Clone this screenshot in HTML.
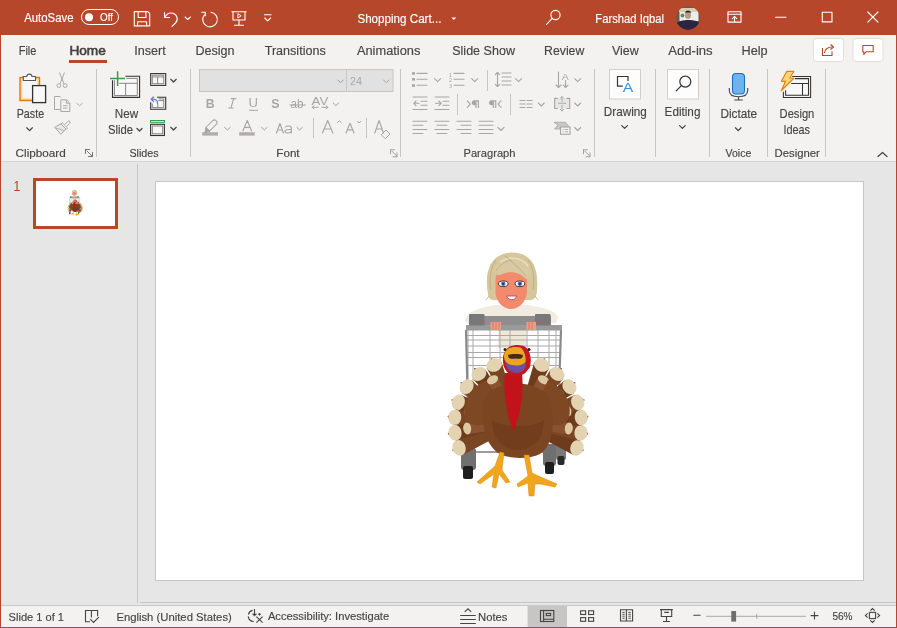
<!DOCTYPE html>
<html><head><meta charset="utf-8">
<style>
*{margin:0;padding:0;box-sizing:border-box}
html,body{width:897px;height:628px;overflow:hidden;background:#B7472A;font-family:"Liberation Sans",sans-serif}
.bg{position:absolute}
svg{position:absolute;left:0;top:0;will-change:transform}
text{font-family:"Liberation Sans",sans-serif}
</style></head><body>
<div class="bg" style="left:0;top:0;width:897px;height:35px;background:#B7472A"></div>
<div class="bg" style="left:1px;top:35px;width:895px;height:126px;background:#F3F2F1"></div>
<div class="bg" style="left:1px;top:161px;width:895px;height:1px;background:#D6D5D3"></div>
<div class="bg" style="left:1px;top:162px;width:895px;height:443px;background:#E6E6E6"></div>
<div class="bg" style="left:1px;top:605px;width:895px;height:1px;background:#C9C9C9"></div>
<div class="bg" style="left:1px;top:606px;width:895px;height:21px;background:#F3F2F1"></div>
<svg width="897" height="628" viewBox="0 0 897 628">
<!-- ============ TITLE BAR ============ -->
<g fill="#fff" font-size="12" stroke="#fff" stroke-width="0.15">
  <text x="24.2" y="21.7" textLength="49.4" lengthAdjust="spacingAndGlyphs">AutoSave</text>
  <text x="100" y="20.9" font-size="10.3" textLength="12.9" lengthAdjust="spacingAndGlyphs">Off</text>
  <text x="357.4" y="22.7" textLength="84" lengthAdjust="spacingAndGlyphs">Shopping Cart...</text>
  <text x="595.3" y="22.7" textLength="68.8" lengthAdjust="spacingAndGlyphs">Farshad Iqbal</text>
</g>
<g fill="none" stroke="#fff" stroke-width="1">
  <rect x="81.5" y="9.5" width="37" height="15" rx="7.5"/>
</g>
<circle cx="89" cy="17.2" r="4" fill="#fff"/>
<g fill="none" stroke="#fff" stroke-width="1.1" stroke-linejoin="round" stroke-linecap="round">
  <!-- save -->
  <path d="M134.3 11.6 H147.8 L149.7 13.5 V25.9 H134.3 Z"/>
  <path d="M138.2 11.6 V17.5 H145.9 V11.6"/>
  <path d="M137.6 25.9 V21.7 H146.6 V25.9"/>
  <!-- undo -->
  <path d="M164.5 12.5 V17.5 H169.5"/>
  <path d="M164.8 17.2 C167 13.5 170 12.5 173 13.3 C177.5 14.8 178.5 20 175.5 23 L172 26.3"/>
  <path d="M185 17 L187.7 19.5 L190.4 17"/>
  <!-- redo circle -->
  <path d="M204.5 14.8 A7.3 7.3 0 1 0 211 12.3"/>
  <path d="M201.8 12.3 H205.3 V15.8"/>
  <!-- presenter -->
  <path d="M231.8 11.8 H246.2"/>
  <path d="M233 12 V20 H245 V12"/>
  <path d="M239 20 V25.2 M234.5 25.2 H243.5"/>
  <path d="M238.2 13.8 L241.2 15.8 L238.2 17.8 Z" stroke-width="0.9"/>
  <!-- customize -->
  <path d="M264.5 14.8 H271"/>
  <path d="M264.8 18 L267.7 20.8 L270.6 18"/>
  <!-- search -->
  <circle cx="555.5" cy="15" r="4.6"/>
  <path d="M552.2 18.3 L546.5 24.5"/>
  <!-- ribbon display -->
  <rect x="728" y="11.8" width="13" height="10.3"/>
  <path d="M728 14.3 H741"/>
  <path d="M734.5 21.8 V16.5 M732.3 18.6 L734.5 16.4 L736.7 18.6"/>
  <!-- minimize/maximize/close -->
  <path d="M775.6 17.3 H786"/>
  <rect x="822.3" y="12.2" width="9.7" height="9.7"/>
  <path d="M867.8 12 L878 22.2 M878 12 L867.8 22.2"/>
</g>

<path d="M451.3 17.4 H456.3 L453.8 20 Z" fill="#fff"/>
<defs><clipPath id="av"><circle cx="688" cy="18" r="11.8"/></clipPath></defs>
<g clip-path="url(#av)">
  <rect x="676" y="6" width="24" height="24" fill="#6b5a48"/>
  <rect x="679" y="8" width="20" height="4" fill="#d8cdb0"/>
  <rect x="679.5" y="12" width="19" height="9" fill="#e8eef0"/>
  <circle cx="682.5" cy="15.5" r="2" fill="#6d8a55"/>
  <ellipse cx="688" cy="15" rx="3" ry="4" fill="#b89a86"/>
  <path d="M684.5 12.5 Q688 8.5 691.5 12.5 Z" fill="#2a2226"/>
  <path d="M676 30 V23 Q682 19.5 688 20 Q695 19.5 700 23 V30 Z" fill="#2e2440"/>
</g>
<!-- ============ TABS ============ -->
<g fill="#444" font-size="12.5" stroke="#444" stroke-width="0.15">
  <text x="18.7" y="55" textLength="17.7" lengthAdjust="spacingAndGlyphs">File</text>
  <text x="69.4" y="55" textLength="36.4" lengthAdjust="spacingAndGlyphs" fill="#404040" stroke="#404040" stroke-width="0.55">Home</text>
  <text x="134.2" y="55" textLength="31.5" lengthAdjust="spacingAndGlyphs">Insert</text>
  <text x="195.5" y="55" textLength="39.1" lengthAdjust="spacingAndGlyphs">Design</text>
  <text x="264.7" y="55" textLength="61" lengthAdjust="spacingAndGlyphs">Transitions</text>
  <text x="356.9" y="55" textLength="63.5" lengthAdjust="spacingAndGlyphs">Animations</text>
  <text x="452.2" y="55" textLength="62.8" lengthAdjust="spacingAndGlyphs">Slide Show</text>
  <text x="544.1" y="55" textLength="40.2" lengthAdjust="spacingAndGlyphs">Review</text>
  <text x="612" y="55" textLength="26.8" lengthAdjust="spacingAndGlyphs">View</text>
  <text x="668.2" y="55" textLength="44.5" lengthAdjust="spacingAndGlyphs">Add-ins</text>
  <text x="741.5" y="55" textLength="26.1" lengthAdjust="spacingAndGlyphs">Help</text>
</g>
<rect x="69" y="60" width="38" height="3" fill="#B7472A"/>
<rect x="813.5" y="38.5" width="30" height="23" rx="3" fill="#fff" stroke="#E1DFDD"/>
<rect x="853" y="38.5" width="30" height="23" rx="3" fill="#fff" stroke="#E1DFDD"/>
<g fill="none" stroke="#B7472A" stroke-width="1.1" stroke-linejoin="round">
  <path d="M822.5 48 V55.5 H832 V51.5"/>
  <path d="M824.5 53 C825 48.5 828 47 832.5 47"/>
  <path d="M830.5 44.5 L833.5 47 L830.5 49.5"/>
  <path d="M862.8 45.5 H873.2 V51.8 H866 L863.8 54.3 V51.8 H862.8 Z"/>
</g>
<!-- ============ RIBBON ============ -->
<g fill="#444" font-size="12.9" stroke="#444" stroke-width="0.15">
  <text x="16.7" y="117.9" textLength="27.4" lengthAdjust="spacingAndGlyphs">Paste</text>
  <text x="114.7" y="117.9" textLength="23.4" lengthAdjust="spacingAndGlyphs">New</text>
  <text x="108" y="133.7" textLength="25" lengthAdjust="spacingAndGlyphs">Slide</text>
  <text x="603.8" y="115.9" textLength="43" lengthAdjust="spacingAndGlyphs">Drawing</text>
  <text x="664.6" y="115.9" textLength="35.8" lengthAdjust="spacingAndGlyphs">Editing</text>
  <text x="720.4" y="117.8" textLength="36.8" lengthAdjust="spacingAndGlyphs">Dictate</text>
  <text x="779.6" y="117.8" textLength="34.7" lengthAdjust="spacingAndGlyphs">Design</text>
  <text x="783.4" y="133.7" textLength="26.6" lengthAdjust="spacingAndGlyphs">Ideas</text>
</g>
<g fill="#444" font-size="11.3" stroke="#444" stroke-width="0.15">
  <text x="15.6" y="157" textLength="50.2" lengthAdjust="spacingAndGlyphs">Clipboard</text>
  <text x="129.4" y="157" textLength="29.1" lengthAdjust="spacingAndGlyphs">Slides</text>
  <text x="276.3" y="156.6" textLength="23.3" lengthAdjust="spacingAndGlyphs">Font</text>
  <text x="463.5" y="156.6" textLength="52" lengthAdjust="spacingAndGlyphs">Paragraph</text>
  <text x="725.6" y="157.3" textLength="25.7" lengthAdjust="spacingAndGlyphs">Voice</text>
  <text x="774.6" y="157.3" textLength="45.3" lengthAdjust="spacingAndGlyphs">Designer</text>
</g>
<!-- separators -->
<g fill="#C8C6C4">
  <rect x="96" y="69" width="1" height="88"/>
  <rect x="190" y="69" width="1" height="88"/>
  <rect x="400" y="69" width="1" height="88"/>
  <rect x="594" y="69" width="1" height="88"/>
  <rect x="655" y="69" width="1" height="88"/>
  <rect x="709" y="69" width="1" height="88"/>
  <rect x="767" y="69" width="1" height="88"/>
  <rect x="825" y="69" width="1" height="88"/>
  <rect x="313" y="118" width="1" height="20"/>
  <rect x="366" y="118" width="1" height="20"/>
  <rect x="487" y="70" width="1" height="21"/>
  <rect x="457" y="94" width="1" height="21"/>
  <rect x="510" y="94" width="1" height="21"/>
</g>
<!-- chevrons dark -->
<g fill="none" stroke="#444" stroke-width="1.25" stroke-linecap="round" stroke-linejoin="round">
  <path d="M26.8 127.8 L29.6 130.6 L32.4 127.8"/>
  <path d="M137 128.5 L139.5 131 L142 128.5"/>
  <path d="M170.8 79.3 L173.5 82 L176.2 79.3"/>
  <path d="M170.8 127.3 L173.5 130 L176.2 127.3"/>
  <path d="M621.8 125.6 L624.6 128.4 L627.4 125.6"/>
  <path d="M679.6 125.6 L682.4 128.4 L685.2 125.6"/>
  <path d="M735.4 127.8 L738.2 130.6 L741 127.8"/>
  <path d="M878 156.5 L882.5 152.5 L887 156.5" stroke-width="1.2"/>
  <!-- dialog launchers -->
  <path d="M85.5 149.5 H89.5 M85.5 149.5 V153.5 M87 151 L92.5 156.5 M92.5 152.5 V156.5 H88.5" stroke="#666" stroke-width="0.9"/>
  <path d="M390.5 149.8 H394.5 M390.5 149.8 V153.8 M392 151.3 L397 156.3 M397 152.8 V156.8 H393" stroke="#999" stroke-width="0.9"/>
  <path d="M583.5 149.8 H587.5 M583.5 149.8 V153.8 M585 151.3 L590 156.3 M590 152.8 V156.8 H586" stroke="#999" stroke-width="0.9"/>
</g>
<!-- Paste -->
<rect x="20" y="77.5" width="19.5" height="23" fill="#FFD98C" stroke="#E07A10" stroke-width="1.4"/>
<rect x="22.2" y="79.7" width="15.1" height="18.6" fill="#F6F6F6"/>
<path d="M23.3 80.5 V76.5 H26.8 C27 73.3 31.8 73.3 32 76.5 H35.5 V80.5 Z" fill="#fff" stroke="#555" stroke-width="1.1"/>
<rect x="32.6" y="85.6" width="13" height="17" fill="#F8F8F8" stroke="#333" stroke-width="1.3"/>
<!-- Cut/Copy/Format painter (disabled grey) -->
<g fill="none" stroke="#A8A8A8" stroke-width="1">
  <path d="M59.5 72.5 L64 84 M64.5 72.5 L60 84"/>
  <circle cx="58.8" cy="85.6" r="1.9"/>
  <circle cx="65.2" cy="85.6" r="1.9"/>
  <path d="M61 109.5 H54.5 V96.5 H60 L61 97.5"/>
  <path d="M60.8 99.8 H66.5 L69.8 103 V111.5 H60.8 Z" fill="#F1F1F1"/>
  <path d="M66.3 99.8 V103.2 H69.8"/>
  <path d="M63 105.7 H67.5 M63 108.1 H67.5" stroke-width="0.9"/>
  <path d="M76.6 103 L79.6 105.8 L82.6 103"/>
  <path d="M61.3 123.6 L54.6 127.2 L60.9 134.3 L66.2 129 Z" fill="#E8E8E8"/>
  <path d="M55.8 128 L64.3 130.6" stroke-width="0.8"/>
  <path d="M62.2 122.7 L67.6 128 L66.3 129.3 L60.9 124 Z" fill="#F3F2F1"/>
  <path d="M64.6 124.7 L67.9 121.3 A1.3 1.3 0 0 1 69.8 123.2 L66.4 126.6" fill="#F3F2F1"/>
</g>
<!-- New slide -->
<rect x="114.4" y="78.4" width="22.9" height="17.1" fill="#F8F8F8"/>
<path d="M125.4 76.3 H139.6 V97.4 H112.5 V80.2" fill="none" stroke="#333" stroke-width="1.1"/>
<path d="M126.4 78.4 H137.3 V95.5 H114.4 V80.2 M119.2 83.3 H137.3 M125.6 83.3 V95.5" fill="none" stroke="#7A7A7A" stroke-width="0.9"/>
<path d="M110 78.5 H125.1 M117.6 71.2 V86.1" stroke="#33A04F" stroke-width="1.5" fill="none"/>
<!-- Layout / Reset / Section -->
<rect x="152" y="75" width="11.8" height="8.6" fill="#F8F8F8"/>
<rect x="150.7" y="73.6" width="15" height="11.8" fill="none" stroke="#333" stroke-width="1.1"/>
<path d="M152.3 75.2 H163.7 V83.7 H152.3 Z M152.3 76.9 H163.7 M157.6 76.9 V83.7" fill="none" stroke="#7A7A7A" stroke-width="0.9"/>
<rect x="152" y="98.5" width="11.8" height="9.3" fill="#F8F8F8"/>
<path d="M157 97.2 H165.7 V109.3 H150.7 V102.3" fill="none" stroke="#333" stroke-width="1.1"/>
<path d="M158.5 98.9 H163.7 V107.6 H152.3 V103.5 M158.5 100.6 H163.7 M157.8 104 V107.6" fill="none" stroke="#7A7A7A" stroke-width="0.9"/>
<path d="M157.6 103.6 C157.8 100.4 155.6 98.8 151.6 99.2 M153.6 97 L151.2 99.3 L153.6 101.5" fill="none" stroke="#3A8FD9" stroke-width="1.3" stroke-linecap="round" stroke-linejoin="round"/>
<rect x="150.5" y="120.5" width="14" height="1.8" fill="#E8F5EC" stroke="#2E9E4F" stroke-width="1"/>
<rect x="152" y="125.6" width="11" height="8.4" fill="#F8F8F8"/>
<rect x="150.6" y="124.3" width="13.8" height="11.2" fill="none" stroke="#333" stroke-width="1.1"/>
<rect x="152.3" y="126" width="10.4" height="7.8" fill="none" stroke="#7A7A7A" stroke-width="0.9"/>
<!-- Font boxes -->
<rect x="199.5" y="69.5" width="147" height="22" fill="#E1E1E1" stroke="#C6C6C6"/>
<rect x="346.5" y="69.5" width="46.5" height="22" fill="#E1E1E1" stroke="#C6C6C6"/>
<text x="350" y="84.5" font-size="11.5" fill="#A9A9A9" textLength="12" lengthAdjust="spacingAndGlyphs">24</text>
<g fill="none" stroke="#A0A0A0" stroke-width="1" stroke-linecap="round" stroke-linejoin="round">
  <path d="M337.8 80 L340.6 82.8 L343.4 80"/>
  <path d="M383.6 80 L386.4 82.8 L389.2 80"/>
  <path d="M333.2 103 L335.9 105.6 L338.6 103"/>
  <path d="M224.5 127.3 L227.4 130 L230.3 127.3"/>
  <path d="M261.5 127.3 L264.3 130 L267.1 127.3"/>
  <path d="M296.8 127.3 L299.6 130 L302.4 127.3"/>
</g>
<g fill="#A6A6A6">
  <text x="205.8" y="108" font-size="13" font-weight="bold" textLength="8.8" lengthAdjust="spacingAndGlyphs">B</text>
  <text x="248.5" y="107" font-size="12.5" textLength="9.5" lengthAdjust="spacingAndGlyphs">U</text>
  <text x="271.2" y="108.3" font-size="13.5" font-weight="bold" textLength="8.3" lengthAdjust="spacingAndGlyphs">S</text>
  <text x="290.5" y="108" font-size="12" textLength="13" lengthAdjust="spacingAndGlyphs">ab</text>
  <text x="311.5" y="104.5" font-size="11.5" textLength="16.8" lengthAdjust="spacingAndGlyphs">AV</text>
  <rect x="249" y="109.8" width="9" height="1"/>
  <rect x="202.2" y="132.2" width="15.8" height="3.4" fill="#B0ADAA"/>
  <rect x="239.2" y="132.2" width="15.5" height="3.4" fill="#B0ADAA"/>
</g>
<g fill="none" stroke="#A6A6A6" stroke-width="1" stroke-linecap="round" stroke-linejoin="round">
  <path d="M289.8 105 H305.5"/>
  <path d="M231.2 98.6 H236 M233.6 98.6 L231 108 M228.6 108 H233.3" stroke-width="1.05"/>
  <path d="M243 130.7 L247.25 120.5 L251.5 130.7 M244.87 127.44 H249.63" stroke-width="1.15"/>
  <path d="M322.5 133 L327.65 120.5 L332.8 133 M324.77 129.00 H330.53" stroke-width="1.15"/>
  <path d="M346 133 L350.00 123.3 L354 133 M347.76 129.90 H352.24" stroke-width="1.15"/>
  <path d="M374.8 133 L379.10 120.5 L383.4 133 M376.69 129.00 H381.51" stroke-width="1.15"/>
  <path d="M276.5 133 L279.95 123.5 L283.4 133 M278.02 129.96 H281.88" stroke-width="1.15"/>
  <path d="M285.6 127 C286.8 125.6 291.4 125.5 291.4 128.3 V133 M291.4 129.6 C287 129.2 285 130 285 131.3 C285 133.6 290.5 133.6 291.4 131.6" stroke-width="1.1"/>
  <path d="M314 108.8 L312.2 107.3 L314 105.8 M312.2 107.3 H318.3 M321.8 107.3 H327.9 M326.1 105.8 L327.9 107.3 L326.1 108.8"/>
  <path d="M337.5 122.5 L339.3 120.8 L341.1 122.5"/>
  <path d="M357.5 121.3 L359.2 123 L360.9 121.3"/>
  <path d="M381.5 134.5 L386 130 L390 134 L385.5 138.5 Z"/>
  <g transform="translate(210.5 126.5) rotate(-45)"><path d="M-4 -2.6 H5.5 A2.6 2.6 0 0 1 5.5 2.6 H-4 Z"/><path d="M-4 -2.6 L-8.5 0.5 L-4 2.6 Z" fill="#A6A6A6"/></g>
</g>
<!-- Paragraph icons -->
<g fill="#A6A6A6">
  <rect x="412" y="72.2" width="3" height="2.5"/><rect x="412" y="78.1" width="3" height="2.5"/><rect x="412" y="84.3" width="3" height="2.5"/>
  <text x="449" y="76.5" font-size="5" textLength="3" lengthAdjust="spacingAndGlyphs">1</text>
  <text x="449" y="82.4" font-size="5" textLength="3" lengthAdjust="spacingAndGlyphs">2</text>
  <text x="449" y="88.4" font-size="5" textLength="3" lengthAdjust="spacingAndGlyphs">3</text>
  <text x="561.8" y="79.5" font-size="9.5" textLength="7" lengthAdjust="spacingAndGlyphs">A</text>
  <path d="M471.7 102.7 C471.7 101.2 472.8 100.3 474.3 100.3 H479 V108 H477.8 V101.5 H476.6 V108 H475.4 V105.2 H474.3 C472.8 105.2 471.7 104.2 471.7 102.7 Z"/>
  <path d="M489 102.7 C489 101.2 490.1 100.3 491.6 100.3 H496.3 V108 H495.1 V101.5 H493.9 V108 H492.7 V105.2 H491.6 C490.1 105.2 489 104.2 489 102.7 Z"/>
</g>
<g fill="none" stroke="#A6A6A6" stroke-width="1.1" stroke-linecap="round" stroke-linejoin="round">
  <path d="M417 73.4 H427 M417 79.3 H427 M417 85.3 H427"/>
  <path d="M454 73.4 H464 M454 79.3 H464 M454 85.3 H464"/>
  <path d="M434.6 78.7 L437.6 81.7 L440.6 78.7"/>
  <path d="M471.7 78.7 L474.7 81.7 L477.7 78.7"/>
  <path d="M515.5 78.7 L518.5 81.7 L521.5 78.7"/>
  <path d="M574.7 78.7 L577.7 81.7 L580.7 78.7"/>
  <path d="M538.3 103 L541.3 106 L544.3 103"/>
  <path d="M574.7 103 L577.7 106 L580.7 103"/>
  <path d="M498 127.5 L501 130.5 L504 127.5"/>
  <path d="M574.7 127.5 L577.7 130.5 L580.7 127.5"/>
  <!-- line spacing -->
  <path d="M497.5 72.5 V86.5 M495.3 74.7 L497.5 72.5 L499.7 74.7 M495.3 84.3 L497.5 86.5 L499.7 84.3"/>
  <path d="M502 73 H511 M502 77 H511 M502 81 H511 M502 85 H511"/>
  <!-- text direction -->
  <path d="M558.5 72 V87.5 M556 85 L558.5 87.5 L561 85"/>
  <path d="M565.6 80.5 V87.5 M563.2 85.2 L565.6 87.5 L568 85.2"/>
  <!-- indents -->
  <path d="M413 97 H427 M413 109.5 H427 M421 101.3 H427 M421 105.3 H427 M414 103.3 H419 M416 101 L413.8 103.3 L416 105.6"/>
  <path d="M435 97 H449 M435 109.5 H449 M443 101.3 H449 M443 105.3 H449 M435.5 103.3 H441 M439 101 L441.2 103.3 L439 105.6"/>
  <path d="M467.3 100.9 L470.3 104.2 L467.3 107.4"/>
  <path d="M501 100.9 L498 104.2 L501 107.4"/>
  <!-- columns -->
  <path d="M520 100.5 H525 M520 104 H525 M520 107.5 H525 M527 100.5 H532 M527 104 H532 M527 107.5 H532"/>
  <!-- align text -->
  <rect x="555" y="98.4" width="14.5" height="9.8" fill="#E6E6E6" stroke="none"/>
  <path d="M557.5 98.4 H554.6 V108.5 H557.5 M566.8 98.4 H569.7 V108.5 H566.8"/>
  <path d="M558.5 103.3 H565.7 M562 96.5 V101.5 M560.2 98.3 L562 96.5 L563.8 98.3 M562 105.3 V111 M560.2 109.2 L562 111 L563.8 109.2" stroke-width="0.9"/>
  <!-- alignments -->
  <path d="M413 121.2 H427 M413 125.3 H423 M413 129.5 H427 M413 133.5 H423"/>
  <path d="M435 121.2 H449 M437 125.3 H447 M435 129.5 H449 M437 133.5 H447"/>
  <path d="M457 121.2 H471 M461 125.3 H471 M457 129.5 H471 M461 133.5 H471"/>
  <path d="M479 121.2 H493 M479 125.3 H493 M479 129.5 H493 M479 133.5 H493"/>
</g>
<!-- smartart -->
<path d="M554.5 129 L558 125 L554 122.3 H565.5 L569 126.5 L566.5 129 Z" fill="#C8C8C8" stroke="#A6A6A6" stroke-width="0.8"/>
<rect x="560.5" y="127" width="9.5" height="7.3" fill="#F3F2F1" stroke="#A6A6A6" stroke-width="1.1"/>
<path d="M562.5 129.5 H563.5 M564.8 129.5 H568 M562.5 131.8 H563.5 M564.8 131.8 H568" stroke="#A6A6A6" stroke-width="0.9"/>
<!-- Drawing / Editing -->
<rect x="609.5" y="69.5" width="31" height="29.5" fill="#FDFDFD" stroke="#D2D0CE"/>
<rect x="667.5" y="69.5" width="31" height="29.5" fill="#FDFDFD" stroke="#D2D0CE"/>
<path d="M622.8 86.2 H617.5 V76.5 H628 V81" fill="none" stroke="#333" stroke-width="1.2"/>
<text x="622.8" y="91.7" font-size="13" fill="#2F8FDB" textLength="10.5" lengthAdjust="spacingAndGlyphs">A</text>
<g fill="none" stroke="#333" stroke-width="1.2">
  <circle cx="685.3" cy="81.6" r="5.5"/>
  <path d="M681.4 85.6 L676 91.2"/>
</g>
<!-- Dictate mic -->
<rect x="732.5" y="73.5" width="12" height="20.5" rx="3.5" fill="#6FB3EC" stroke="#1F6FC0" stroke-width="1.1"/>
<path d="M729.3 88 V90.3 C729.3 94.5 733 96.8 738.5 96.8 C744 96.8 747.7 94.5 747.7 90.3 V88 M738.5 96.8 V100 M734.3 100 H742.7" fill="none" stroke="#444" stroke-width="1.1"/>
<!-- Design Ideas -->
<rect x="785.6" y="78.6" width="22.9" height="16.7" fill="#F8F8F8"/>
<g fill="none" stroke="#333" stroke-width="1.05">
  <path d="M792.2 76.4 H810.6 V97.5 H783.4 V91.8"/>
  <path d="M795 78.6 H808.5 V95.3 H785.6 V90.2 M791.2 83.4 H808.5 M802.5 83.4 V95.3"/>
</g>
<path d="M786.8 71.3 H793.9 L789.8 78 L793.9 78.3 L781.4 90.5 L785.5 81.3 H781.4 Z" fill="#F8D577" stroke="#E8800F" stroke-width="1.2" stroke-linejoin="round"/>
<!-- ============ MAIN ============ -->
<rect x="137" y="164" width="1" height="439" fill="#C6C6C6"/>
<rect x="140" y="602" width="756" height="1" fill="#C6C6C6"/>
<rect x="155.5" y="181.5" width="708" height="399" fill="#fff" stroke="#C6C6C6"/>
<text x="13.3" y="190.6" font-size="14.5" fill="#B7472A" textLength="7.2" lengthAdjust="spacingAndGlyphs">1</text>
<rect x="34.5" y="179.5" width="82" height="48" fill="#fff" stroke="#B7472A" stroke-width="3"/>
<!-- thumbnail mini image -->
<g transform="translate(75.3 203) scale(0.108) translate(-519 -375)">
  <use href="#pic"/>
</g>
<!-- big picture -->
<g id="pic">
<rect x="498" y="318" width="28" height="30" fill="#EFE8D6"/>
<g fill="none" stroke="#A9A9A9" stroke-width="1">
<path d="M468 330 V452"/>
<path d="M473 330 V452"/>
<path d="M490 330 V365"/>
<path d="M500 330 V365"/>
<path d="M510 330 V365"/>
<path d="M527 330 V365"/>
<path d="M538 330 V365"/>
<path d="M549 330 V365"/>
<path d="M556 330 V452"/>
<path d="M466 335.5 H561"/>
<path d="M466 340 H561"/>
<path d="M466 346 H561"/>
<path d="M466 352.5 H561"/>
<path d="M466 357.5 H561"/>
<path d="M466 365.5 H561"/>
</g>
<path d="M466 330 L469 452 M561 330 L557 452" stroke="#8A8A8A" stroke-width="2.2" fill="none"/>
<path d="M470 452 H556" stroke="#9C9C9C" stroke-width="2" fill="none"/>
<path d="M465 321 C466 312 478 308 495 305 L528 305 C545 308 557 311 558 318 L556 323 L468 324 Z" fill="#F1ECDF"/>
<path d="M488 294 C484 272 490 254 511 252.5 C532 252 539 268 537 290 C537 297 534 301 528 300 L496 300 C491 301 488 298 488 294 Z" fill="#D6C69C"/>
<path d="M495.5 280 C495.5 270 502 267.5 511 267.5 C520 267.5 527 270 527 280 L527 292 C526 303 518 309 511 309 C504 309 496 303 495.5 292 Z" fill="#F28A6E"/>
<path d="M493 270 C497 259 522 255 531 268 C531 274 529 279 526 279 C520 272 510 270 500 275 C497 276 494 274 493 270 Z" fill="#D9C9A2"/>
<path d="M500 262 C508 256 522 257 528 266" stroke="#E8DCC0" stroke-width="2" fill="none"/>
<g fill="none" stroke="#B9A57A" stroke-width="0.9" opacity="0.8"><path d="M491 290 C489 280 490 268 496 260"/><path d="M533 290 C535 280 534 268 528 260"/><path d="M505 256 C512 262 520 268 526 276"/><path d="M496 271 C500 264 506 261 512 260"/><path d="M489 296 L486 300 M535 296 L538 300"/></g>
<ellipse cx="503.3" cy="283.8" rx="4.8" ry="2.8" fill="#fff" stroke="#2A2A3A" stroke-width="0.9"/>
<circle cx="503.3" cy="283.8" r="2.2" fill="#4F76A8"/>
<circle cx="503.3" cy="283.8" r="0.9" fill="#1A1A2A"/>
<ellipse cx="519.9" cy="283.8" rx="4.8" ry="2.8" fill="#fff" stroke="#2A2A3A" stroke-width="0.9"/>
<circle cx="519.9" cy="283.8" r="2.2" fill="#4F76A8"/>
<circle cx="519.9" cy="283.8" r="0.9" fill="#1A1A2A"/>
<path d="M506.5 296 C509 301 514.5 301 517 296 Z" fill="#fff" stroke="#C0455A" stroke-width="0.9"/>
<rect x="469" y="316" width="82" height="10" fill="#8E8E8E"/>
<rect x="466" y="325" width="96" height="5.5" fill="#9A9A9A"/>
<rect x="469" y="314" width="15.5" height="11.5" rx="1" fill="#787878"/>
<rect x="535" y="314" width="15.5" height="11.5" rx="1" fill="#787878"/>
<path d="M490.5 322 h10.5 v8 h-10.5 Z M526.5 322 h9.5 v8 h-9.5 Z" fill="#EE9C84"/>
<path d="M493 322 v8 M496 322 v8 M499 322 v8 M529 322 v8 M532 322 v8" stroke="#C46A55" stroke-width="0.6"/>
<rect x="461" y="448" width="15" height="22" rx="3" fill="#707070"/>
<rect x="463" y="466" width="10" height="13" rx="2" fill="#1E1E1E"/>
<rect x="543" y="444" width="13" height="22" rx="3" fill="#707070"/>
<rect x="545" y="462" width="9" height="12" rx="2" fill="#1E1E1E"/>
<rect x="556" y="440" width="10" height="20" rx="2" fill="#7A7A7A"/>
<rect x="557.5" y="456" width="7" height="9" rx="2" fill="#2A2A2A"/>
<path d="M533.0 426.8 L579.4 440.2 L583.8 450.6 L573.4 455.0 L530.8 432.4 Z" fill="#6E3C1C"/>
<ellipse cx="576.9" cy="447.8" rx="6.5" ry="8.0" transform="rotate(22.0 576.9 447.8)" fill="#E3D3B0"/>
<path d="M533.3 423.1 L581.5 424.8 L588.3 433.9 L579.3 440.7 L532.4 429.1 Z" fill="#7A4523"/>
<ellipse cx="580.9" cy="432.8" rx="6.5" ry="8.0" transform="rotate(8.0 580.9 432.8)" fill="#E3D3B0"/>
<path d="M532.6 419.4 L579.8 409.5 L588.6 416.6 L581.5 425.4 L533.2 425.4 Z" fill="#6E3C1C"/>
<ellipse cx="581.2" cy="417.4" rx="6.5" ry="8.0" transform="rotate(-6.0 581.2 417.4)" fill="#E3D3B0"/>
<path d="M531.1 416.1 L574.5 394.9 L584.7 399.7 L579.9 410.0 L533.1 421.7 Z" fill="#7A4523"/>
<ellipse cx="577.7" cy="402.3" rx="6.5" ry="8.0" transform="rotate(-20.0 577.7 402.3)" fill="#E3D3B0"/>
<path d="M528.4 412.8 L564.3 380.5 L575.4 382.3 L573.7 393.4 L531.9 417.6 Z" fill="#6E3C1C"/>
<ellipse cx="569.4" cy="386.7" rx="6.5" ry="8.0" transform="rotate(-36.0 569.4 386.7)" fill="#E3D3B0"/>
<path d="M524.9 410.3 L550.5 369.4 L561.7 368.1 L563.1 379.3 L529.6 414.0 Z" fill="#7A4523"/>
<ellipse cx="557.1" cy="374.0" rx="6.5" ry="8.0" transform="rotate(-52.0 557.1 374.0)" fill="#E3D3B0"/>
<path d="M520.8 409.0 L534.2 362.6 L544.6 358.2 L549.0 368.6 L526.4 411.2 Z" fill="#6E3C1C"/>
<ellipse cx="541.8" cy="365.1" rx="6.5" ry="8.0" transform="rotate(-68.0 541.8 365.1)" fill="#E3D3B0"/>
<path d="M509.6 411.2 L487.0 368.6 L491.4 358.2 L501.8 362.6 L515.2 409.0 Z" fill="#7A4523"/>
<ellipse cx="494.2" cy="365.1" rx="6.5" ry="8.0" transform="rotate(-112.0 494.2 365.1)" fill="#E3D3B0"/>
<path d="M506.4 414.0 L472.9 379.3 L474.3 368.1 L485.5 369.4 L511.1 410.3 Z" fill="#6E3C1C"/>
<ellipse cx="478.9" cy="374.0" rx="6.5" ry="8.0" transform="rotate(-128.0 478.9 374.0)" fill="#E3D3B0"/>
<path d="M504.1 417.6 L462.3 393.4 L460.6 382.3 L471.7 380.5 L507.6 412.8 Z" fill="#7A4523"/>
<ellipse cx="466.6" cy="386.7" rx="6.5" ry="8.0" transform="rotate(-144.0 466.6 386.7)" fill="#E3D3B0"/>
<path d="M502.9 421.7 L456.1 410.0 L451.3 399.7 L461.5 394.9 L504.9 416.1 Z" fill="#6E3C1C"/>
<ellipse cx="458.3" cy="402.3" rx="6.5" ry="8.0" transform="rotate(-160.0 458.3 402.3)" fill="#E3D3B0"/>
<path d="M502.8 425.4 L454.5 425.4 L447.4 416.6 L456.2 409.5 L503.4 419.4 Z" fill="#7A4523"/>
<ellipse cx="454.8" cy="417.4" rx="6.5" ry="8.0" transform="rotate(-174.0 454.8 417.4)" fill="#E3D3B0"/>
<path d="M503.6 429.1 L456.7 440.7 L447.7 433.9 L454.5 424.8 L502.7 423.1 Z" fill="#6E3C1C"/>
<ellipse cx="455.1" cy="432.8" rx="6.5" ry="8.0" transform="rotate(-188.0 455.1 432.8)" fill="#E3D3B0"/>
<path d="M505.2 432.4 L462.6 455.0 L452.2 450.6 L456.6 440.2 L503.0 426.8 Z" fill="#7A4523"/>
<ellipse cx="459.1" cy="447.8" rx="6.5" ry="8.0" transform="rotate(-202.0 459.1 447.8)" fill="#E3D3B0"/>
<path d="M528.2 421.9 L568.3 422.4 L573.8 428.9 L567.3 434.3 L527.7 427.9 Z" fill="#8A5230"/>
<ellipse cx="568.8" cy="428.4" rx="4.0" ry="6.0" transform="rotate(5.0 568.8 428.4)" fill="#DCC9A2"/>
<path d="M526.9 418.5 L564.7 405.3 L572.1 409.5 L567.8 416.9 L528.4 424.3 Z" fill="#8A5230"/>
<ellipse cx="567.3" cy="410.8" rx="4.0" ry="6.0" transform="rotate(-15.0 567.3 410.8)" fill="#DCC9A2"/>
<path d="M524.5 415.8 L555.5 390.4 L563.9 391.9 L562.4 400.2 L527.9 420.7 Z" fill="#8A5230"/>
<ellipse cx="559.8" cy="394.7" rx="4.0" ry="6.0" transform="rotate(-35.0 559.8 394.7)" fill="#DCC9A2"/>
<path d="M520.4 413.8 L537.8 377.7 L546.0 375.5 L548.2 383.7 L525.6 416.8 Z" fill="#8A5230"/>
<ellipse cx="543.5" cy="379.8" rx="4.0" ry="6.0" transform="rotate(-60.0 543.5 379.8)" fill="#DCC9A2"/>
<path d="M510.4 416.8 L487.8 383.7 L490.0 375.5 L498.2 377.7 L515.6 413.8 Z" fill="#8A5230"/>
<ellipse cx="492.5" cy="379.8" rx="4.0" ry="6.0" transform="rotate(-120.0 492.5 379.8)" fill="#DCC9A2"/>
<path d="M508.1 420.7 L473.6 400.2 L472.1 391.9 L480.5 390.4 L511.5 415.8 Z" fill="#8A5230"/>
<ellipse cx="476.2" cy="394.7" rx="4.0" ry="6.0" transform="rotate(-145.0 476.2 394.7)" fill="#DCC9A2"/>
<path d="M507.6 424.3 L468.2 416.9 L463.9 409.5 L471.3 405.3 L509.1 418.5 Z" fill="#8A5230"/>
<ellipse cx="468.7" cy="410.8" rx="4.0" ry="6.0" transform="rotate(-165.0 468.7 410.8)" fill="#DCC9A2"/>
<path d="M508.3 427.9 L468.7 434.3 L462.2 428.9 L467.7 422.4 L507.8 421.9 Z" fill="#8A5230"/>
<ellipse cx="467.2" cy="428.4" rx="4.0" ry="6.0" transform="rotate(-185.0 467.2 428.4)" fill="#DCC9A2"/>
<path d="M486 380 C470 388 460 405 466 420 C475 430 492 425 500 410 Z" fill="#7E4824"/>
<path d="M548 380 C564 388 574 405 568 420 C559 430 542 425 534 410 Z" fill="#7E4824"/>
<path d="M484 400 C480 425 486 448 502 455 C512 459 530 459 540 454 C553 446 556 422 550 400 C540 378 494 378 484 400 Z" fill="#7C4522"/>
<path d="M492 420 C492 440 504 450 517 450 C532 450 544 440 544 420 C535 428 500 428 492 420 Z" fill="#6A391A" opacity="0.6"/>
<path d="M505 373 C503 392 506 414 513.5 431 C521 414 524 392 522 373 Z" fill="#C2131B"/>
<path d="M503 362 C502 351 508 345 517 345 C526 345 531 351 530 362 C529 371 524 376 517 376 C509 376 504 371 503 362 Z" fill="#C8161E"/>
<path d="M505 362 C507 369 511 373 516.5 373 C522 373 526 369 528 362 L527 360 C521 363 511 363 506 360 Z" fill="#6C50A8"/>
<path d="M504 357 C503.5 350 509 347 516 347 C523.5 347 527.5 350 527.5 357 C527 363 522 365.5 516 365.5 C510 365.5 504.5 363 504 357 Z" fill="#EBA520"/>
<path d="M522 345.5 C529 347.5 532.5 357 530 367 C528 371 525.5 371 525.5 365 C526.5 357 524.5 350 520 347 Z" fill="#C8161E"/>
<path d="M508 355 C510 353.5 521 353.5 523 355 C523 358.5 520 359.5 515.5 358.5 C511 359.5 508 358.5 508 355 Z" fill="#4A2A14"/>
<path d="M513.5 359.3 L517.5 359.3 L515.5 362 Z" fill="#F08080"/>
<circle cx="505" cy="349.5" r="1.5" fill="#3A1A10"/><circle cx="529" cy="349.5" r="1.5" fill="#3A1A10"/>
<g fill="#F0A51C" stroke="#D98A10" stroke-width="0.5">
<path d="M500 452 L504 453 L502 470 L510 482 L506 483 L499 474 L496 488 L492 487 L494 474 L480 484 L477 482 L495 466 Z"/>
<path d="M524 455 L529 455 L532 473 L543 478 L557 484 L555 487 L540 484 L535 484 L534 496 L529 496 L528 483 L518 487 L517 484 L528 476 Z"/>
</g>
</g>
<!-- ============ STATUS BAR ============ -->
<g fill="#444" font-size="11.2" stroke="#444" stroke-width="0.15">
  <text x="8.6" y="620.5" textLength="55.4" lengthAdjust="spacingAndGlyphs">Slide 1 of 1</text>
  <text x="116.4" y="620.5" textLength="115.4" lengthAdjust="spacingAndGlyphs">English (United States)</text>
  <text x="267.9" y="620.2" textLength="121.3" lengthAdjust="spacingAndGlyphs">Accessibility: Investigate</text>
  <text x="478.1" y="620.8" textLength="29.4" lengthAdjust="spacingAndGlyphs">Notes</text>
  <text x="832.4" y="620.4" textLength="20.1" lengthAdjust="spacingAndGlyphs">56%</text>
</g>
<rect x="527.6" y="606" width="39.4" height="21" fill="#C8C6C4"/>
<g fill="none" stroke="#444" stroke-width="1.1">
  <path d="M90 621.7 H85.5 V610.5 H97.6 V616.3 M91.4 610.5 V617.5 M90.2 619.2 L93.5 622.4 L98.8 617.1"/>
  <!-- accessibility -->
  <path d="M252.6 610.4 A5.8 5.8 0 0 0 248.4 614.5 M248.2 616.4 A5.8 5.8 0 0 0 253.7 621.5"/>
  <path d="M254.5 609 V614.5"/>
  <path d="M252.4 614 L254.5 616 L256.6 614 Z M258.3 614.3 L259.5 613.1 L260.7 614.3 L259.5 615.5 Z" fill="#444" stroke-width="0.6"/>
  <path d="M256.4 616.6 L262.6 622.6 M262.6 616.6 L256.4 622.6"/>
  <!-- notes -->
  <path d="M460.2 615.5 H475.8 M460.2 619.5 H475.8 M460.2 623.5 H475.8"/>
  <path d="M464.7 611.8 L468 608.8 L471.2 611.8"/>
  <!-- normal view -->
  <rect x="540.5" y="610.5" width="13.3" height="11"/>
  <path d="M543.6 610.5 V621.5 M543.6 619.2 H553.8"/>
  <rect x="546.3" y="613.4" width="4.3" height="2.2"/>
  <!-- sorter -->
  <rect x="580.6" y="610.8" width="5" height="3.7"/><rect x="588.6" y="610.8" width="5" height="3.7"/>
  <rect x="580.6" y="617.6" width="5" height="3.7"/><rect x="588.6" y="617.6" width="5" height="3.7"/>
  <!-- reading -->
  <path d="M620.5 609.8 H626.4 V621 H620.5 Z M626.4 609.8 H632.6 V621 H626.4 Z"/>
  <path d="M622.3 612.4 H624.7 M622.3 614.3 H624.7 M622.3 616.2 H624.7 M622.3 618.3 H624.7 M628.3 612.4 H630.8 M628.3 614.3 H630.8 M628.3 616.2 H630.8 M628.3 618.3 H630.8" stroke-width="0.9"/>
  <!-- slideshow -->
  <path d="M660 609.6 H672.8 M661.3 609.6 V616.5 H671.7 V609.6 M666.5 616.5 V621.5 M663 621.5 H670 M664.3 612.4 H668.9"/>
  <!-- zoom -->
  <path d="M693.3 615.2 H700.6 M810.6 615.6 H818.4 M814.5 611.7 V619.5"/>
  <!-- fit -->
  <rect x="869.4" y="612.4" width="6.2" height="6.2"/>
  <path d="M870.3 610.7 L872.5 608.5 L874.7 610.7 M870.3 620.3 L872.5 622.5 L874.7 620.3 M867.6 613.3 L865.4 615.5 L867.6 617.7 M877.4 613.3 L879.6 615.5 L877.4 617.7"/>
</g>
<rect x="706" y="615.8" width="100" height="1" fill="#A8A8A8"/>
<rect x="756.2" y="613.8" width="1" height="5" fill="#A8A8A8"/>
<rect x="731.3" y="611" width="4.8" height="10.6" fill="#6E6E6E"/>
</svg>
</body></html>
